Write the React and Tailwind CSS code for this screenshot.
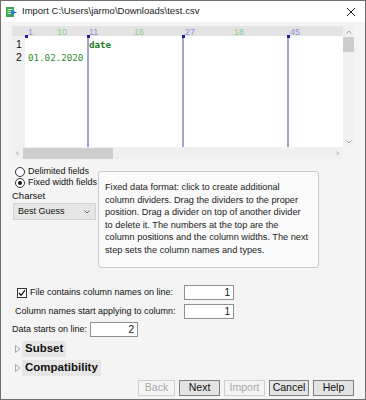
import React from "react";

const font = { fontFamily: '"Liberation Sans", Arial, sans-serif' };

function Btn({ children, disabled, w }) {
  return (
    <div
      className={`h-[16px] flex items-center justify-center border text-[10.5px] ${w} ${
        disabled
          ? "border-[#cfcfcf] bg-[#f4f4f4] text-[#a8a8a8]"
          : "border-[#7f7f7f] bg-[#e3e3e3] text-[#111]"
      }`}
    >
      {children}
    </div>
  );
}

function NumInput({ value, w }) {
  return (
    <div
      className={`h-[15px] shrink-0 bg-white border border-[#8f8f8f] text-[10px] leading-[13px] text-right pr-[3px] text-[#111] ${w}`}
    >
      {value}
    </div>
  );
}

const infoLines = [
  "Fixed data format: click to create additional",
  "column dividers. Drag the dividers to the proper",
  "position. Drag a divider on top of another divider",
  "to delete it. The numbers at the top are the",
  "column positions and the column widths. The next",
  "step sets the column names and types.",
];

export default function App() {
  const header = [
    { x: 3, t: "1", c: "text-[#8f8fe0]" },
    { x: 32, t: "10", c: "text-[#8fcf8f]" },
    { x: 64, t: "11", c: "text-[#8f8fe0]" },
    { x: 109, t: "16", c: "text-[#8fcf8f]" },
    { x: 160, t: "27", c: "text-[#8f8fe0]" },
    { x: 209, t: "18", c: "text-[#8fcf8f]" },
    { x: 265, t: "45", c: "text-[#8f8fe0]" },
  ];
  const dividers = [62, 157, 262];
  return (
    <div
      className="w-[366px] h-[400px] bg-[#f4f4f4] border border-[#6e6e6e] flex flex-col overflow-hidden text-[#111] whitespace-nowrap"
      style={font}
    >
      {/* title bar */}
      <div className="h-[21px] bg-white flex items-center shrink-0">
        <svg width="12" height="12" viewBox="0 0 12 12" className="ml-[5px]">
          <rect x="0" y="1" width="8" height="10" fill="#3fa34d" />
          <rect x="1.5" y="3" width="5" height="1" fill="#c8f0c8" />
          <rect x="1.5" y="5" width="5" height="1" fill="#c8f0c8" />
          <rect x="1.5" y="7" width="5" height="1" fill="#c8f0c8" />
          <path d="M5 4 L11 6.5 L5 9 Z" fill="#2a7de1" />
        </svg>
        <span className="ml-[4px] text-[9.5px] text-[#1a1a1a]">
          Import C:\Users\jarmo\Downloads\test.csv
        </span>
        <svg width="10" height="10" viewBox="0 0 10 10" className="ml-auto mr-[9px]">
          <path d="M1 1 L9 9 M9 1 L1 9" stroke="#222" strokeWidth="1" />
        </svg>
      </div>

      <div className="flex-1 flex flex-col pl-[11px] pr-[11px] pt-[4px]">
        {/* data panel */}
        <div className="flex h-[133px]">
          <div className="flex-1 flex flex-col">
            <div className="h-[10px] bg-[#e3e3e3] flex">
              <div className="w-[13px] shrink-0" />
              <div className="flex-1 relative text-[9px] leading-[10px]">
                {header.map((h) => (
                  <span key={h.x} className={`absolute top-[1px] ${h.c}`} style={{ left: h.x }}>
                    {h.t}
                  </span>
                ))}
              </div>
            </div>
            <div className="flex-1 flex">
              <div className="w-[13px] shrink-0 bg-[#f0f0f0] flex flex-col pt-[2px] text-[10.5px] leading-[13px] pl-[4px]">
                <span>1</span>
                <span>2</span>
              </div>
              <div className="flex-1 bg-white relative">
                {dividers.map((d) => (
                  <div key={d} className="absolute top-0 bottom-0 w-[2px] bg-[#a3a3d3]" style={{ left: d }} />
                ))}
                {[0, 62, 157, 262].map((d) => (
                  <div key={"p" + d} className="absolute top-[-1px] w-[3px] h-[3px] bg-[#1e1e9a]" style={{ left: d }} />
                ))}
                <div
                  className="relative pt-[2px] text-[9.2px] leading-[13px] text-[#2e8b2e]"
                  style={{ fontFamily: '"DejaVu Sans Mono", "Liberation Mono", monospace' }}
                >
                  <div className="pl-[64px] font-bold text-[#1f7a1f]">date</div>
                  <div className="pl-[3px]">01.02.2020</div>
                </div>
              </div>
            </div>
            <div className="h-[12px] bg-[#f0f0f0] flex items-center">
              <span className="w-[11px] text-[9px] text-[#9a9a9a] text-center leading-none">‹</span>
              <div className="w-[90px] h-[11px] bg-[#cdcdcd]" />
              <div className="flex-1" />
              <span className="w-[11px] text-[9px] text-[#9a9a9a] text-center leading-none">›</span>
            </div>
          </div>
          <div className="w-[11px] flex flex-col bg-[#f0f0f0]">
            <div className="h-[11px] flex items-center justify-center">
              <svg width="6" height="4" viewBox="0 0 6 4"><path d="M0.5 3.5 L3 1 L5.5 3.5" stroke="#a0a0a0" fill="none" /></svg>
            </div>
            <div className="h-[15px] bg-[#cdcdcd]" />
            <div className="flex-1" />
            <div className="h-[11px] flex items-center justify-center">
              <svg width="6" height="4" viewBox="0 0 6 4"><path d="M0.5 0.5 L3 3 L5.5 0.5" stroke="#a0a0a0" fill="none" /></svg>
            </div>
            <div className="h-[12px] bg-[#f4f4f4]" />
          </div>
        </div>

        {/* options */}
        <div className="flex mt-[7px] text-[9px]">
          <div className="w-[86px] shrink-0 flex flex-col">
            <div className="flex items-center h-[11px] pl-[3px]">
              <span className="w-[10px] h-[10px] shrink-0 rounded-full border border-[#333] bg-white" />
              <span className="ml-[3px]">Delimited fields</span>
            </div>
            <div className="flex items-center h-[11px] pl-[3px]">
              <span className="w-[10px] h-[10px] shrink-0 rounded-full border border-[#333] bg-white flex items-center justify-center">
                <span className="w-[4px] h-[4px] rounded-full bg-[#111]" />
              </span>
              <span className="ml-[3px]">Fixed width fields</span>
            </div>
            <div className="mt-[2px] h-[12px] leading-[12px] text-[9.5px]">Charset</div>
            <div className="mt-[1px] ml-[1px] w-[83px] h-[17px] bg-[#e6e6e6] border border-[#d2d2d2] flex items-center px-[4px]">
              <span>Best Guess</span>
              <svg width="6" height="4" viewBox="0 0 6 4" className="ml-auto mr-[1px]"><path d="M0.5 0.5 L3 3 L5.5 0.5" stroke="#666" fill="none" /></svg>
            </div>
          </div>
          <div className="mt-[5px] w-[221px] h-[97px] border border-[#c9c9c9] rounded-[3px] bg-[#fafafa] pl-[6px] pt-[9px] text-[9.2px] leading-[12.6px] text-[#222] flex flex-col">
            {infoLines.map((l) => (
              <span key={l}>{l}</span>
            ))}
          </div>
        </div>

        <div className="mt-[17px] flex flex-col text-[9px]">
          <div className="flex items-center h-[15px]">
            <div className="w-[172px] shrink-0 flex items-center pl-[5px]">
              <span className="w-[10px] h-[10px] shrink-0 border border-[#333] bg-white flex items-center justify-center">
                <svg width="8" height="8" viewBox="0 0 8 8"><path d="M1 4 L3 6.3 L7 1.2" stroke="#111" strokeWidth="1.3" fill="none" /></svg>
              </span>
              <span className="ml-[3px]">File contains column names on line:</span>
            </div>
            <NumInput value="1" w="w-[50px]" />
          </div>
          <div className="flex items-center h-[15px] mt-[4px]">
            <div className="w-[172px] shrink-0 pl-[3px]">Column names start applying to column:</div>
            <NumInput value="1" w="w-[50px]" />
          </div>
          <div className="flex items-center h-[15px] mt-[3px]">
            <div className="w-[78px] shrink-0">Data starts on line:</div>
            <NumInput value="2" w="w-[48px]" />
          </div>
          <div className="flex items-center mt-[4px] h-[16px]">
            <svg width="6" height="8" viewBox="0 0 6 8" className="ml-[3px]"><path d="M0.5 0.5 L5 4 L0.5 7.5 Z" stroke="#a5a5a5" fill="none" /></svg>
            <div className="ml-[1px] h-[16px] px-[3px] bg-[#e6e6e6] font-bold text-[11.5px] flex items-center">Subset</div>
          </div>
          <div className="flex items-center mt-[3px] h-[16px]">
            <svg width="6" height="8" viewBox="0 0 6 8" className="ml-[3px]"><path d="M0.5 0.5 L5 4 L0.5 7.5 Z" stroke="#a5a5a5" fill="none" /></svg>
            <div className="ml-[1px] h-[16px] px-[3px] bg-[#e6e6e6] font-bold text-[11.5px] flex items-center">Compatibility</div>
          </div>
          <div className="flex justify-end gap-[4px] mt-[4px]">
            <Btn disabled w="w-[37px]">Back</Btn>
            <Btn w="w-[41px]">Next</Btn>
            <Btn disabled w="w-[41px]">Import</Btn>
            <Btn w="w-[40px]">Cancel</Btn>
            <Btn w="w-[41px]">Help</Btn>
          </div>
        </div>
      </div>
    </div>
  );
}
